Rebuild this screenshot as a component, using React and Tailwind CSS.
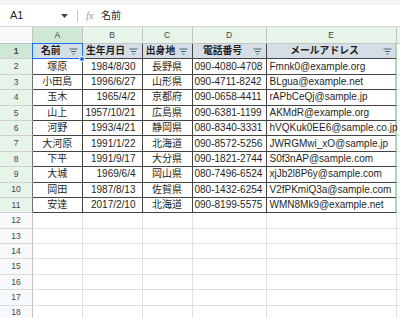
import React from "react";

const rows = [
  ["塚原", "1984/8/30", "長野県", "090-4080-4708", "Fmnk0@example.org"],
  ["小田島", "1996/6/27", "山形県", "090-4711-8242", "BLgua@example.net"],
  ["玉木", "1965/4/2", "京都府", "090-0658-4411", "rAPbCeQj@sample.jp"],
  ["山上", "1957/10/21", "広島県", "090-6381-1199", "AKMdR@example.org"],
  ["河野", "1993/4/21", "静岡県", "080-8340-3331", "hVQKuk0EE6@sample.co.jp"],
  ["大河原", "1991/1/22", "北海道", "090-8572-5256", "JWRGMwi_xO@sample.jp"],
  ["下平", "1991/9/17", "大分県", "090-1821-2744", "S0f3nAP@sample.com"],
  ["大城", "1969/6/4", "岡山県", "080-7496-6524", "xjJb2l8P6y@sample.com"],
  ["岡田", "1987/8/13", "佐賀県", "080-1432-6254", "V2fPKmiQ3a@sample.com"],
  ["安達", "2017/2/10", "北海道", "090-8199-5575", "WMN8Mk9@example.net"],
];

const headers = ["名前", "生年月日", "出身地", "電話番号", "メールアドレス"];

function FilterIcon() {
  return (
    <svg width="9" height="7" viewBox="0 0 9 7" className="shrink-0">
      <path d="M0.5 1h8M2 3.5h5M3.5 6h2" stroke="#3f6b70" strokeWidth="1" />
    </svg>
  );
}

function RowHead({ n, active, table }) {
  return (
    <div
      className={
        "w-[33px] shrink-0 flex items-center justify-center text-[8.5px] text-[#444] border-r border-b " +
        (active
          ? "bg-[#cfe8d5] border-r-[#6f6f6f] border-b-[#d0d0d0]"
          : table
          ? "bg-[#e6f4ea] border-r-[#6f6f6f] border-b-[#d0d0d0]"
          : "bg-[#f8f9fa] border-r-[#c4c4c4] border-b-[#dadada]")
      }
    >
      {n}
    </div>
  );
}

export default function App() {
  return (
    <div
      className="w-[400px] h-[318px] overflow-hidden bg-white text-[#1f1f1f]"
      style={{ fontFamily: "'Liberation Sans', 'Noto Sans CJK JP', sans-serif" }}
    >
      <div className="h-[5px] bg-[#f1f3f4]" />
      {/* formula bar */}
      <div className="h-[22px] flex items-center border-b border-[#d5d5d5] text-[11px]">
        <div className="w-[58px] pl-[10px] text-[#1f1f1f]">A1</div>
        <svg width="7" height="4" viewBox="0 0 7 4" className="ml-[3px]">
          <path d="M0 0h7L3.5 4z" fill="#444" />
        </svg>
        <div className="ml-[9px] w-px h-[12px] bg-[#c7c7c7]" />
        <div
          className="ml-[8px] italic text-[#9aa0a6] text-[11px]"
          style={{ fontFamily: "'Liberation Serif', serif" }}
        >
          fx
        </div>
        <div className="ml-[7px] text-[10px]">名前</div>
      </div>

      {/* column letters */}
      <div className="h-[17px] flex text-[8.5px] text-[#444]">
        <div className="w-[33px] shrink-0 bg-[#f8f9fa] border-r border-b border-[#c4c4c4]" />
        <div className="w-[49.5px] shrink-0 bg-[#cfe8d5] border-r border-b border-[#c4c4c4] flex items-center justify-center">A</div>
        <div className="w-[60px] shrink-0 bg-[#e6f4ea] border-r border-b border-[#c4c4c4] flex items-center justify-center">B</div>
        <div className="w-[50px] shrink-0 bg-[#e6f4ea] border-r border-b border-[#c4c4c4] flex items-center justify-center">C</div>
        <div className="w-[74px] shrink-0 bg-[#e6f4ea] border-r border-b border-[#c4c4c4] flex items-center justify-center">D</div>
        <div className="w-[130px] shrink-0 bg-[#e6f4ea] border-r border-b border-[#c4c4c4] flex items-center justify-center">E</div>
        <div className="flex-1 bg-[#e6f4ea] border-b border-[#c4c4c4]" />
      </div>

      {/* table header */}
      <div className="h-[15.4px] flex text-[9.8px] font-bold">
        <RowHead n={1} active />
        <div className="relative w-[49.5px] shrink-0 bg-[#d5dee6] border-r border-b border-[#444] flex items-center pr-[4px]">
          <span className="flex-1 text-center">名前</span>
          <FilterIcon />
          <div className="absolute inset-[-1px] border-[1.5px] border-[#1a73e8]" />
          <div className="absolute right-[-3.5px] bottom-[-3.5px] w-[6px] h-[6px] rounded-full bg-[#1a73e8] border border-white z-10" />
        </div>
        <div className="w-[60px] shrink-0 bg-[#d5dee6] border-r border-b border-[#444] flex items-center pr-[4px]">
          <span className="flex-1 text-center">生年月日</span>
          <FilterIcon />
        </div>
        <div className="w-[50px] shrink-0 bg-[#d5dee6] border-r border-b border-[#444] flex items-center pr-[4px]">
          <span className="flex-1 text-center">出身地</span>
          <FilterIcon />
        </div>
        <div className="w-[74px] shrink-0 bg-[#d5dee6] border-r border-b border-[#444] flex items-center pr-[4px]">
          <span className="flex-1 text-center">電話番号</span>
          <FilterIcon />
        </div>
        <div className="w-[130px] shrink-0 bg-[#d5dee6] border-r-2 border-r-[#a9d8b5] border-b border-b-[#444] flex items-center pr-[3px]">
          <span className="flex-1 text-center">メールアドレス</span>
          <FilterIcon />
        </div>
        <div className="flex-1 border-b border-[#e2e2e2]" />
      </div>

      {/* table body */}
      {rows.map((r, i) => (
        <div key={i} className="h-[15.4px] flex text-[10px] leading-none">
          <RowHead n={i + 2} table />
          <div className="w-[49.5px] shrink-0 border-r border-b border-[#444] flex items-center justify-center">{r[0]}</div>
          <div className="w-[60px] shrink-0 border-r border-b border-[#444] flex items-center justify-end pr-[6px]">{r[1]}</div>
          <div className="w-[50px] shrink-0 border-r border-b border-[#444] flex items-center justify-center">{r[2]}</div>
          <div className="w-[74px] shrink-0 border-r border-b border-[#444] flex items-center pl-[2px]">{r[3]}</div>
          <div className="w-[130px] shrink-0 border-r-2 border-r-[#a9d8b5] border-b border-b-[#444] flex items-center pl-[3px] whitespace-nowrap">{r[4]}</div>
          <div className="flex-1 border-b border-[#e2e2e2]" />
        </div>
      ))}

      {/* empty rows */}
      {[12, 13, 14, 15, 16, 17, 18].map((n) => (
        <div key={n} className="h-[15.4px] flex">
          <RowHead n={n} />
          <div className="w-[49.5px] shrink-0 border-r border-b border-[#e2e2e2]" />
          <div className="w-[60px] shrink-0 border-r border-b border-[#e2e2e2]" />
          <div className="w-[50px] shrink-0 border-r border-b border-[#e2e2e2]" />
          <div className="w-[74px] shrink-0 border-r border-b border-[#e2e2e2]" />
          <div className="w-[130px] shrink-0 border-r border-b border-[#e2e2e2]" />
          <div className="flex-1 border-b border-[#e2e2e2]" />
        </div>
      ))}
    </div>
  );
}
